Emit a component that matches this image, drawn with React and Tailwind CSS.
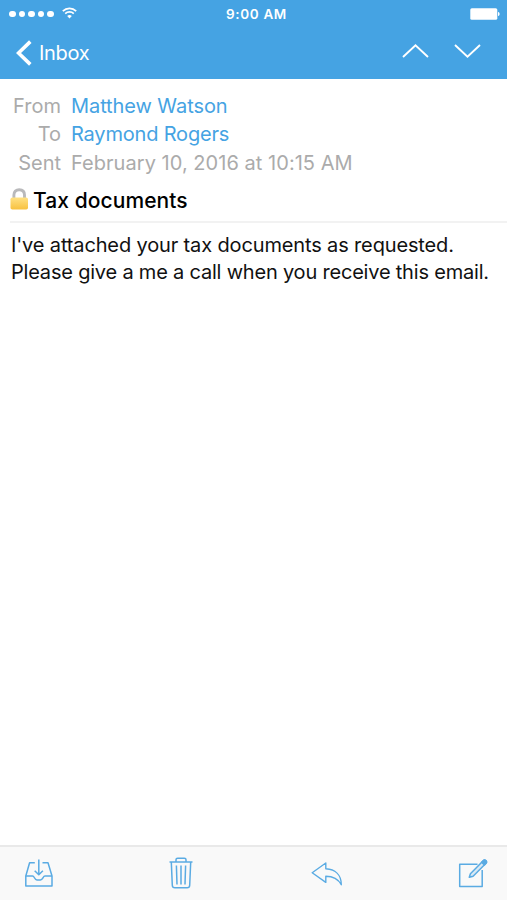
import React from 'react';

const headers = [
  { label: 'From', value: 'Matthew Watson', link: true, spacing: 'tracking-[-0.08px]' },
  { label: 'To', value: 'Raymond Rogers', link: true, spacing: 'tracking-[-0.18px]' },
  { label: 'Sent', value: 'February 10, 2016 at 10:15 AM', link: false, spacing: 'tracking-[0.04px]' },
];

const WifiIcon = () => (
  <svg width="15" height="12" viewBox="0 0 15 12" fill="none" stroke="currentColor" strokeWidth="1.7">
    <path d="M0.8 4.1C4.6 0.4 10.4 0.4 14.2 4.1" />
    <path d="M3.2 6.6C5.6 4.3 9.4 4.3 11.8 6.6" />
    <path d="M5.2 8.9C6.6 7.7 8.4 7.7 9.8 8.9L7.5 11.5Z" fill="currentColor" stroke="none" />
  </svg>
);

const BatteryIcon = () => (
  <svg width="30" height="12" viewBox="0 0 30 12" fill="currentColor">
    <rect x="0.3" y="0.2" width="27" height="11.6" rx="1.6" />
    <path d="M28 4C29.4 4.3 29.6 5.2 29.6 6S29.4 7.7 28 8Z" />
  </svg>
);

const LockIcon = () => (
  <svg width="19" height="22" viewBox="0 0 19 22" fill="none" className="-mt-[2px]">
    <defs>
      <linearGradient id="lock-body" x1="0" y1="0" x2="0" y2="1">
        <stop offset="0" stopColor="#FFE184" />
        <stop offset="1" stopColor="#F8C13F" />
      </linearGradient>
    </defs>
    <path d="M3.9 11V7C3.9 3.7 6 1.7 9.2 1.7S14.5 3.7 14.5 7V11" stroke="#B9B9BB" strokeWidth="2.9" />
    <rect x="0.5" y="9.5" width="17.5" height="12" rx="1.8" fill="url(#lock-body)" />
  </svg>
);

const StatusBar = () => (
  <div className="h-[28px] grid grid-cols-3 items-center pl-[9px] pr-[7px] text-white">
    <div className="flex items-center gap-[3px]">
      {[0, 1, 2, 3, 4].map((i) => (
        <span key={i} className="size-[6.5px] rounded-full bg-white" />
      ))}
      <span className="ml-[5px] -mt-[2px]"><WifiIcon /></span>
    </div>
    <p className="pl-[4px] text-center text-[13.5px] leading-[14px] font-semibold tracking-[0.65px]">9:00 AM</p>
    <div className="flex justify-end -mt-[1px]"><BatteryIcon /></div>
  </div>
);

const NavBar = () => (
  <div className="h-[49px] flex items-center justify-between pl-[16px] pr-[26px] text-white">
    <button className="flex items-center gap-[7px] text-[20px] leading-none tracking-[-0.3px]">
      <svg width="16" height="26" viewBox="0 0 16 26" fill="none" stroke="currentColor" strokeWidth="3.6">
        <path d="M14.3 1.6L2.5 13L14.3 24.4" />
      </svg>
      Inbox
    </button>
    <div className="flex items-center gap-[25px] -mt-[3px]">
      <svg width="27" height="14" viewBox="0 0 27 14" fill="none" stroke="currentColor" strokeWidth="1.9">
        <path d="M1 13L13.5 1.3L26 13" />
      </svg>
      <svg width="27" height="14" viewBox="0 0 27 14" fill="none" stroke="currentColor" strokeWidth="1.9">
        <path d="M1 1L13.5 12.7L26 1" />
      </svg>
    </div>
  </div>
);

const Toolbar = () => (
  <div className="h-[55px] flex items-center justify-between border-t-2 border-[#E9E9E9] bg-[#F9F9F9] pl-[24px] pr-[19px] text-[#5AABE3]">
    {/* Archive */}
    <svg width="30" height="30" viewBox="0 0 30 30" fill="none" stroke="currentColor" strokeWidth="1.5" strokeLinejoin="round">
      <path d="M10.8 3.7H5.6L1.8 17V26.9H28V17L24 3.7H18.5" />
      <path d="M1.8 17H8.5C10.6 17 10.3 20.9 13 20.9H16.4C19.1 20.9 18.8 17 21 17H28" />
      <path d="M14.8 0.6V15.6M10.7 11.7L14.8 15.8L18.9 11.7" />
    </svg>
    {/* Trash */}
    <svg width="24" height="32" viewBox="0 0 24 32" fill="none" stroke="currentColor" strokeWidth="1.5" strokeLinejoin="round" className="-ml-[1px] mr-[1px] -mt-[1px]">
      <path d="M0.5 5H23.5" />
      <path d="M7 5V2.8C7 1.8 7.6 1.2 8.6 1.2H15.4C16.4 1.2 17 1.8 17 2.8V5" />
      <path d="M2.3 5L3.3 28.2C3.4 30 4.3 30.8 5.9 30.8H18.1C19.7 30.8 20.6 30 20.7 28.2L21.7 5" />
      <path d="M7.4 8.5L8 27.5M12 8.5V27.5M16.6 8.5L16 27.5" />
    </svg>
    {/* Reply */}
    <svg width="32" height="24" viewBox="0 0 32 24" fill="none" stroke="currentColor" strokeWidth="1.4" strokeLinejoin="round" className="ml-[1px] -mr-[1px]">
      <path d="M1.2 10.7L14.8 1V6.8C24 7.3 30.3 12.6 30.3 22.7C27 16.7 22.5 14.3 14.8 14.3V20.4Z" />
    </svg>
    {/* Compose */}
    <svg width="30" height="30" viewBox="0 0 30 30" fill="none" stroke="currentColor" strokeWidth="1.5" strokeLinejoin="round">
      <path d="M19.5 5.3H1.7V27.5H24.2V11" />
      <path d="M12.4 14.8L25.2 1.7C26 0.9 26.9 0.8 27.8 1.6S28.8 3.4 28 4.2L15.1 17.2L11.3 18.3Z" fill="currentColor" fillOpacity="0.2" />
      <path d="M23.6 3.3L26.4 6L28 4.2C28.8 3.4 28.8 2.5 27.8 1.6S26 0.9 25.2 1.7Z" fill="currentColor" />
    </svg>
  </div>
);

export default function App() {
  return (
    <div className="h-screen flex flex-col bg-white font-['Inter',sans-serif] text-[20px] overflow-hidden">
      <header className="h-[79px] bg-[#45A3E3]">
        <StatusBar />
        <NavBar />
      </header>

      <main className="flex-1 pt-[13px]">
        <dl>
          {headers.map((h) => (
            <div key={h.label} className="flex h-[28.3px] leading-[28px] text-[#ABABAB]">
              <dt className="w-[61px] text-right tracking-[0px]">{h.label}</dt>
              <dd className={`ml-[10px] whitespace-nowrap ${h.spacing} ${h.link ? 'text-[#45A3E3]' : ''}`}>{h.value}</dd>
            </div>
          ))}
        </dl>

        <div className="ml-[10px] h-[46px] flex items-center gap-[4px] border-b-2 border-[#F2F2F2] pt-[3px]">
          <LockIcon />
          <h1 className="text-[21px] leading-none font-medium tracking-[0.08px] text-black">Tax documents</h1>
        </div>

        <p className="pl-[11px] pt-[9px] leading-[27px] whitespace-nowrap text-[#111111]">
          <span className="tracking-[-0.14px]">I've attached your tax documents as requested.</span>
          <br />
          <span className="tracking-[-0.2px]">Please give a me a call when you receive this email.</span>
        </p>
      </main>

      <Toolbar />
    </div>
  );
}
